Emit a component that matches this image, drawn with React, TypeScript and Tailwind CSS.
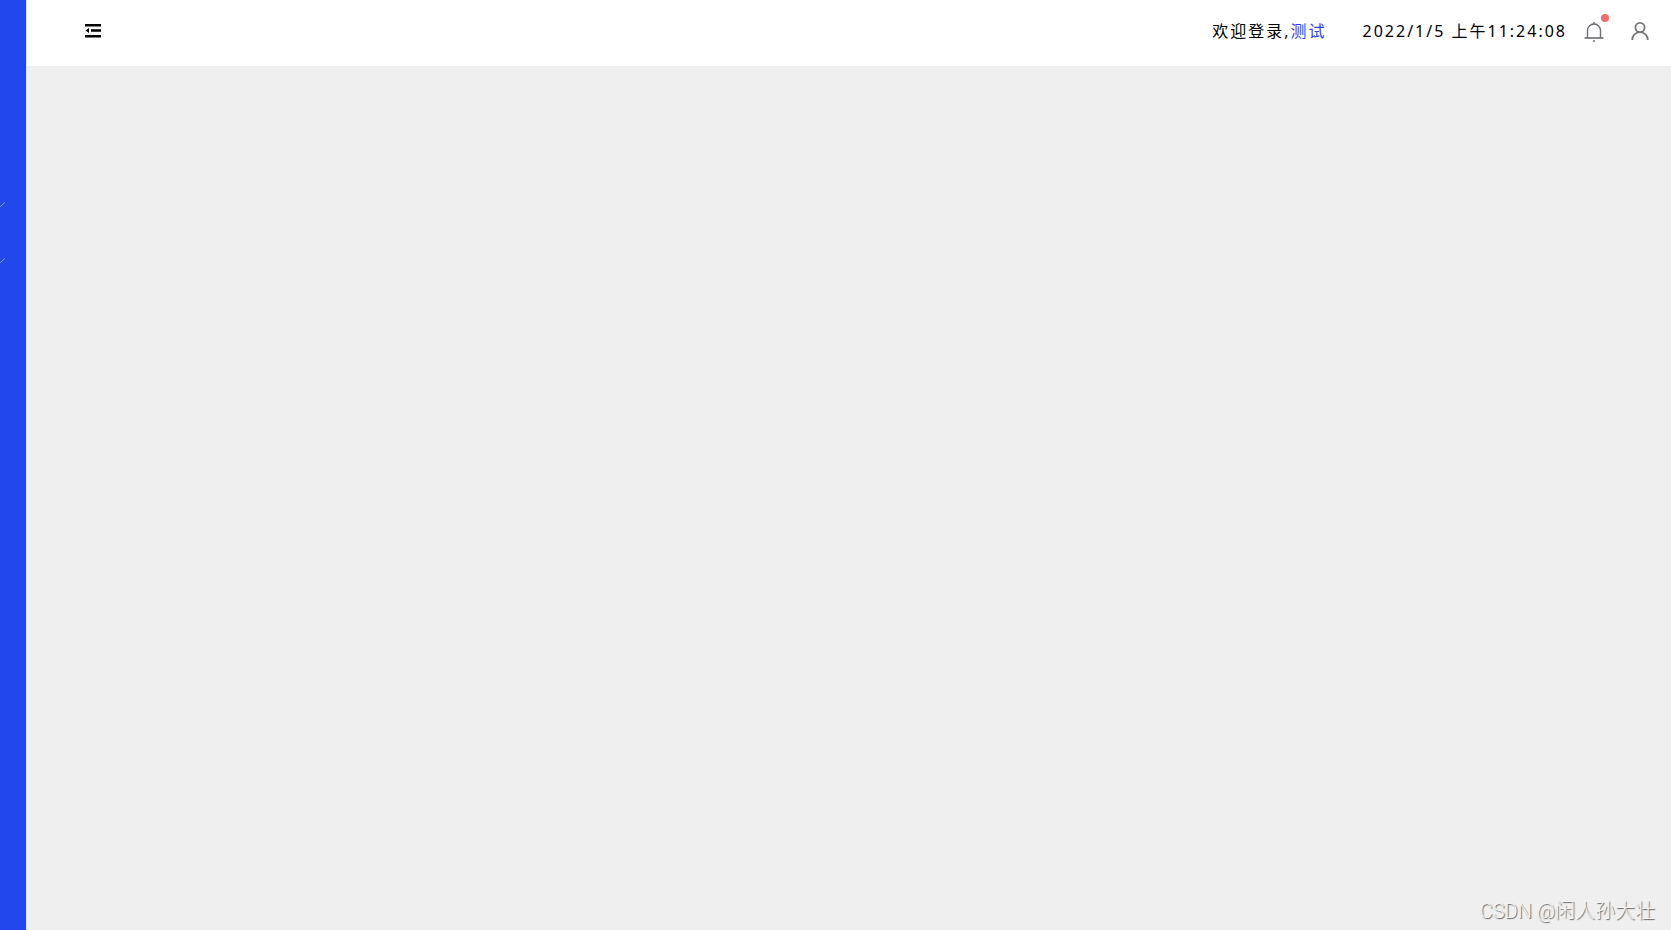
import { useState } from 'react';

const SUBMENUS = ['submenu-1', 'submenu-2'];

function FoldIcon() {
  return (
    <svg width="17" height="15" viewBox="0 0 17 15" fill="#000" aria-hidden="true">
      <path d="M0 0h16v2.500H0zM6 5.200h10v2.500H6zM0 11h16v2.500H0zM0.500 6.500L4 4v5z" />
    </svg>
  );
}

function BellIcon() {
  return (
    <svg width="20" height="20" viewBox="0 0 20 20" fill="none" stroke="#6b6e73" aria-hidden="true">
      <path d="M3.500 16V8.500a6.500 6.500 0 0 1 13 0V16" strokeWidth="1.400" />
      <path d="M0.500 16h19" strokeWidth="1.600" />
      <path d="M9 1h2M9 19h2" strokeWidth="1.600" />
    </svg>
  );
}

function UserIcon() {
  return (
    <svg width="18" height="18" viewBox="0 0 18 18" fill="none" stroke="#777" strokeWidth="1.800" aria-hidden="true">
      <circle cx="9" cy="5.500" r="4.600" />
      <path d="M1.200 18c0-4.500 3.400-7.900 7.800-7.900s7.800 3.400 7.800 7.900" />
    </svg>
  );
}

function Sidebar() {
  return (
    <aside className="w-[27px] shrink-0 overflow-hidden border-r border-[#e6e6e6] bg-[#2146ec] pt-[176px]">
      {SUBMENUS.map((id) => (
        <button key={id} type="button" aria-label={id} className="flex h-14 w-full items-center">
          <svg width="5" height="5" viewBox="0 0 5 5" fill="none" stroke="#8f9bcf" aria-hidden="true">
            <path d="M0 4.800L5 0.300" />
          </svg>
        </button>
      ))}
    </aside>
  );
}

function Header({ onToggle }: { onToggle: () => void }) {
  return (
    <header className="flex h-[66px] items-center justify-between bg-white pr-[22px] pb-1 pl-[58px]">
      <button type="button" aria-label="菜单" onClick={onToggle}>
        <FoldIcon />
      </button>
      <div className="flex items-center text-base tracking-[2px] text-black">
        <p className="mr-9">
          欢迎登录,
          <a href="#user" className="text-[#2d3ff0]">
            测试
          </a>
        </p>
        <time dateTime="2022-01-05T11:24:08" className="mr-[17px]">
          2022/1/5 上午11:24:08
        </time>
        <button type="button" aria-label="消息" className="relative mr-[27px] pt-0.5">
          <BellIcon />
          <span className="absolute -top-1.5 -right-[5px] size-2 rounded-full bg-[#f56c6c]" />
        </button>
        <button type="button" aria-label="用户">
          <UserIcon />
        </button>
      </div>
    </header>
  );
}

export default function App() {
  const [collapsed, setCollapsed] = useState(false);

  return (
    <div className="flex min-h-screen font-['Noto_Sans','Noto_Sans_CJK_SC',sans-serif]">
      {!collapsed && <Sidebar />}
      <div className="flex min-w-0 flex-1 flex-col bg-[#efefef]">
        <Header onToggle={() => setCollapsed(!collapsed)} />
        <main className="flex flex-1 items-end justify-end pr-4 pb-[5px]">
          <p className="font-['Roboto','Noto_Sans_CJK_SC',sans-serif] text-xl font-light text-[#f4f4f4] [text-shadow:1px_1px_1px_#606060]">
            CSDN @闲人孙大壮
          </p>
        </main>
      </div>
    </div>
  );
}
